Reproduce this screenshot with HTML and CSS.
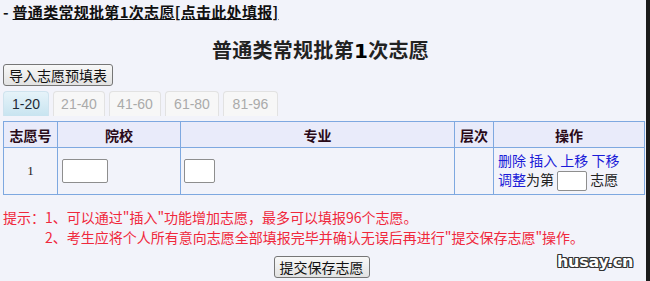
FILE: index.html
```html
<!DOCTYPE html>
<html lang="zh-CN">
<head>
<meta charset="utf-8">
<title>普通类常规批第1次志愿</title>
<link rel="stylesheet" href="styles.css">
</head>
<body>
<div class="page">
  <div class="topline">- <a class="toplink" href="#">普通类常规批第1次志愿[点击此处填报]</a></div>
  <h1 class="heading">普通类常规批第<span class="num">1</span>次志愿</h1>
  <div class="btnrow"><button class="btn">导入志愿预填表</button></div>
  <div class="tabs">
    <span class="tab active">1-20</span>
    <span class="tab">21-40</span>
    <span class="tab">41-60</span>
    <span class="tab">61-80</span>
    <span class="tab">81-96</span>
  </div>
  <table class="grid">
    <thead>
      <tr>
        <th class="c1">志愿号</th>
        <th class="c2">院校</th>
        <th class="c3">专业</th>
        <th class="c4">层次</th>
        <th class="c5">操作</th>
      </tr>
    </thead>
    <tbody>
      <tr>
        <td class="num-cell">1</td>
        <td><input class="in-school" type="text"></td>
        <td><input class="in-major" type="text"></td>
        <td></td>
        <td class="ops">
          <div class="opline"><a href="#">删除</a> <a href="#">插入</a> <a href="#">上移</a> <a href="#">下移</a></div>
          <div class="opline"><a href="#">调整</a>为第 <input class="in-pos" type="text"> 志愿</div>
        </td>
      </tr>
    </tbody>
  </table>
  <div class="tips">
    <div class="tipline"><span class="tiplabel">提示：</span>1、可以通过"插入"功能增加志愿，最多可以填报96个志愿。</div>
    <div class="tipline indent">2、考生应将个人所有意向志愿全部填报完毕并确认无误后再进行"提交保存志愿"操作。</div>
  </div>
  <div class="submitrow"><button class="btn">提交保存志愿</button></div>
  <div class="watermark">husay.cn</div>
</div>
</body>
</html>
```

FILE: styles.css
```css
html {
  background: #1b1b1b;
  margin: 0;
  padding: 0;
}
body {
  margin: 0;
  padding: 0;
}
.page {
  position: relative;
  width: 646px;
  height: 281px;
  background: #f2f3fa;
  box-sizing: border-box;
  padding: 0 0 0 3px;
  font-family: "Noto Sans CJK SC", "Liberation Sans", sans-serif;
  font-size: 14px;
  color: #222;
  overflow: hidden;
}
.topline {
  font-size: 15px;
  font-weight: bold;
  line-height: 20px;
  padding-top: 2px;
  color: #111;
  letter-spacing: 0.3px;
}
.toplink {
  color: #111;
  text-decoration: underline;
}
.heading {
  margin: 17px 0 0 0;
  text-align: center;
  font-size: 20px;
  line-height: 22px;
  font-weight: bold;
  color: #222;
  padding-right: 8px;
  letter-spacing: 0.3px;
}
.heading .num {
  font-family: "DejaVu Sans", sans-serif;
  color: #000;
}
.btnrow {
  margin-top: 2px;
}
.btn {
  font-family: "Noto Sans CJK SC", sans-serif;
  font-size: 14px;
  line-height: 18px;
  height: 22px;
  padding: 0 5px;
  color: #111;
  background: linear-gradient(#f8f8f8, #e2e2e2);
  border: 1px solid #767676;
  border-radius: 3px;
}
.tabs {
  display: flex;
  gap: 4px;
  margin-top: 5px;
  height: 25px;
}
.tab {
  display: block;
  box-sizing: border-box;
  height: 25px;
  width: 52px;
  padding-top: 3px;
  text-align: center;
  font-family: "Liberation Sans", "Noto Sans", sans-serif;
  font-size: 14px;
  line-height: 18px;
  color: #aaa;
  background: #f7f7f7;
  border: 1px solid #e2e2e2;
  border-bottom: none;
  border-radius: 4px 4px 0 0;
}
.tab.active {
  width: 46px;
  color: #1e2a35;
  background: linear-gradient(#e6f3f9, #c8e4f0);
  border-color: #cfe3ee;
}
.tabs .tab:nth-child(2) { width: 52px; }
.tabs .tab:nth-child(4) { width: 54px; }
.tabs .tab:nth-child(5) { width: 55px; }
.grid {
  margin-top: 5px;
  width: 642px;
  border-collapse: collapse;
  table-layout: fixed;
}
.grid th,
.grid td {
  border: 1px solid #7ea8e0;
  padding: 0;
}
.grid th {
  height: 25px;
  background: #e9ebfa;
  font-size: 14px;
  font-weight: bold;
  color: #2a0a18;
  text-align: center;
}
.c1 { width: 53px; }
.c2 { width: 122px; }
.c3 { width: 273px; }
.c4 { width: 38px; }
.grid td {
  height: 46px;
  vertical-align: middle;
}
.num-cell {
  text-align: center;
  font-size: 13px;
  font-family: "Liberation Serif", serif;
  color: #222;
}
input {
  box-sizing: border-box;
  height: 24px;
  border: 1px solid #8e8e8e;
  border-radius: 2px;
  background: #fff;
  margin: 0;
  padding: 0;
}
.in-school {
  width: 46px;
  margin-left: 4px;
}
.in-major {
  width: 31px;
  margin-left: 3px;
}
.ops {
  padding-left: 4px !important;
  font-size: 14px;
  line-height: 19px;
  color: #222;
}
.ops a {
  color: #1b1bd8;
  text-decoration: none;
}
.opline {
  white-space: nowrap;
}
.in-pos {
  width: 30px;
  height: 20px;
  vertical-align: middle;
}
.tips {
  margin-top: 12px;
  color: #f0283c;
  font-size: 14px;
  line-height: 20px;
}
.indent {
  padding-left: 42px;
}
.submitrow {
  margin-top: 9px;
  text-align: center;
  padding-right: 6px;
}
.watermark {
  position: absolute;
  left: 557px;
  top: 252px;
  font-family: "DejaVu Sans", sans-serif;
  font-weight: bold;
  font-size: 16px;
  letter-spacing: -0.3px;
  color: #fff;
  text-shadow: 1px 0 0 #333, -1px 0 0 #333, 0 1px 0 #333, 0 -1px 0 #333, 1px 1px 0 #333, -1px -1px 0 #333, 1px -1px 0 #333, -1px 1px 0 #333;
}
```
